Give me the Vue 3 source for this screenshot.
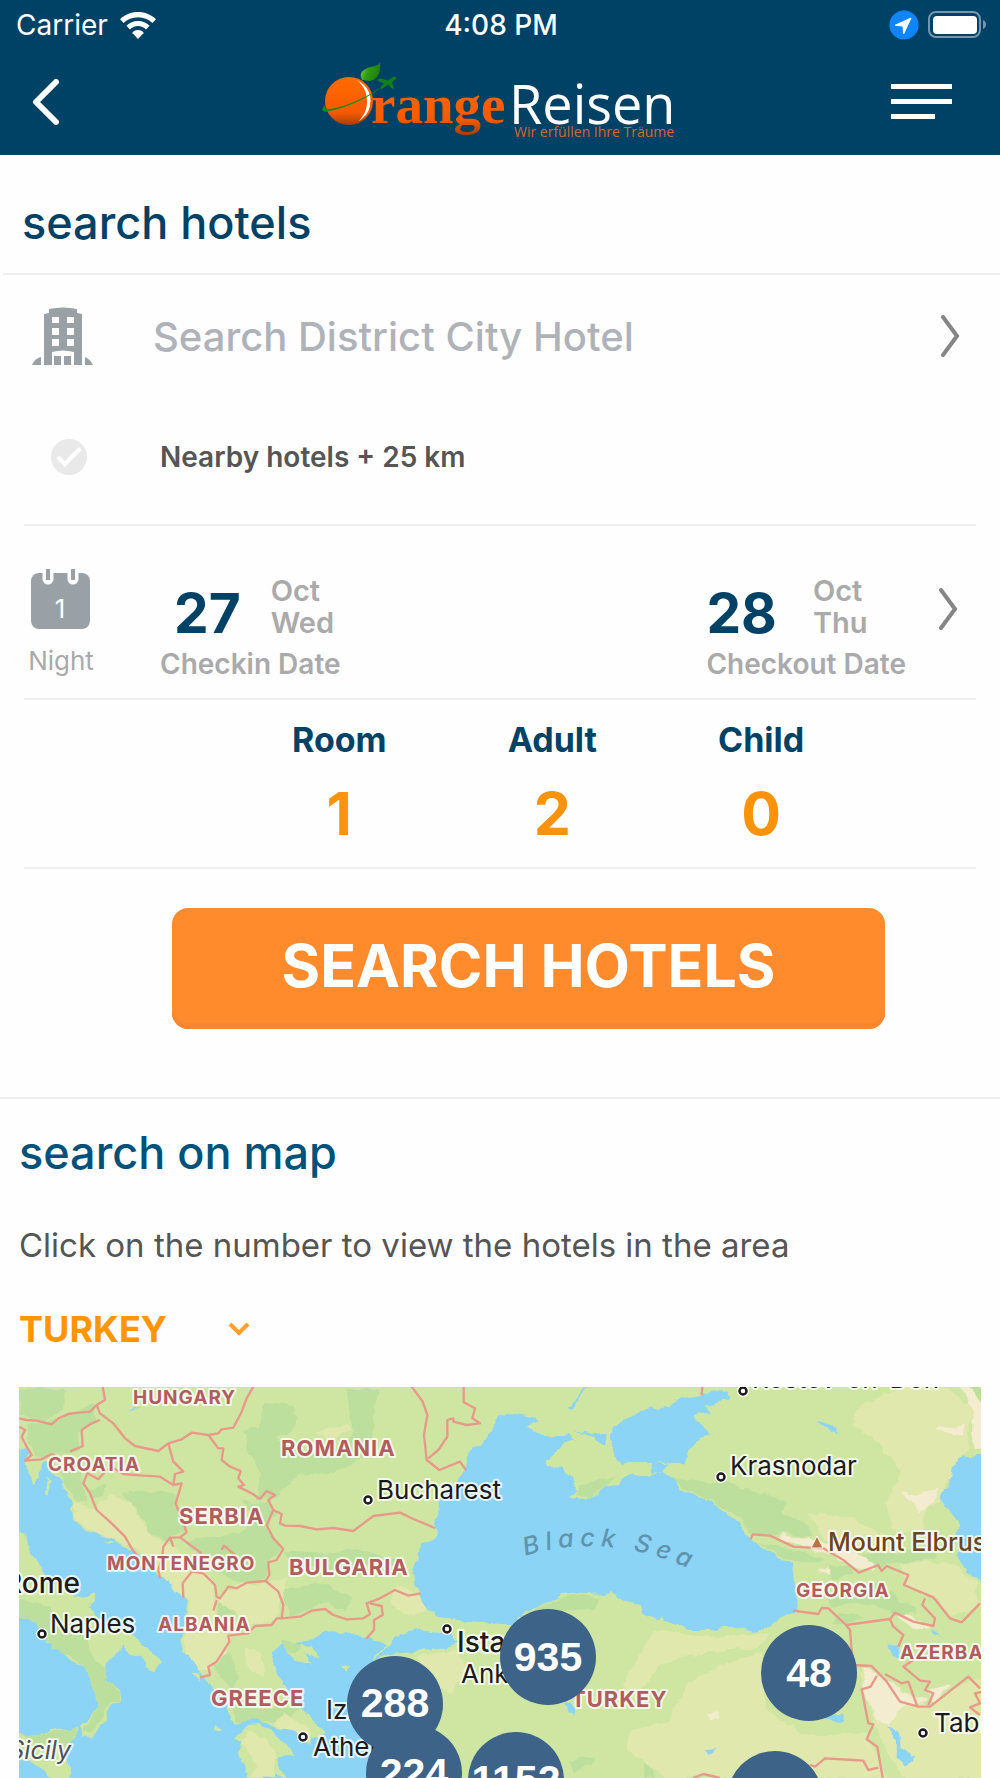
<template>
  <div class="app">
    <header class="header">
      <div class="status">
        <div class="status-left">
          <span>Carrier</span>
          <svg class="wifi" viewBox="0 0 36 27" fill="#fff">
            <path d="M18 0C11 0 4.600 2.700 0 7.200L3.600 11C7.400 7.300 12.400 5.200 18 5.200S28.600 7.300 32.400 11L36 7.200C31.400 2.700 25 0 18 0Z" />
            <path d="M18 9C13.500 9 9.400 10.800 6.400 13.700L10 17.400C12.100 15.300 14.900 14 18 14S23.900 15.300 26 17.400L29.600 13.700C26.600 10.800 22.500 9 18 9Z" />
            <path d="M18 18C15.900 18 14 18.900 12.600 20.300L12.600 21.200L18 27L23.400 21.200L23.400 20.300C22 18.900 20.100 18 18 18Z" />
          </svg>
        </div>
        <span class="time">4:08 PM</span>
        <div class="status-right">
          <svg class="location" viewBox="0 0 30 30">
            <circle cx="15" cy="15" r="14.600" fill="#0f86ff" />
            <path d="M22 8L6 15.300L14 16L14.600 24Z" fill="#fff" stroke="#fff" stroke-width="1" stroke-linejoin="round" />
          </svg>
          <svg class="battery" viewBox="0 0 60 28">
            <rect x="1" y="1" width="51" height="25" rx="7" fill="none" stroke="#7796ad" stroke-width="2" />
            <rect x="5" y="5" width="44" height="18" rx="4" fill="#fff" />
            <path d="M55 9C59 10.500 59 16.500 55 18Z" fill="#7796ad" />
          </svg>
        </div>
      </div>
      <div class="bar">
        <button class="back" aria-label="Back">
          <svg viewBox="0 0 28 46" fill="none" stroke="#fff" stroke-width="6" stroke-linecap="round" stroke-linejoin="round">
            <path d="M24 3L4 23L24 43" />
          </svg>
        </button>
        <svg class="logo" viewBox="0 0 354 80" role="img" aria-label="Orange Reisen">
          <defs>
            <linearGradient id="orange" x1="0" y1="0" x2="0" y2="1">
              <stop offset="0" stop-color="#ff6a00" />
              <stop offset="0.750" stop-color="#f65a00" />
              <stop offset="1" stop-color="#a83c08" />
            </linearGradient>
            <linearGradient id="leaf" x1="0" y1="0" x2="1" y2="0.400">
              <stop offset="0" stop-color="#8ed65b" />
              <stop offset="0.500" stop-color="#2f9a12" />
              <stop offset="1" stop-color="#1f8206" />
            </linearGradient>
          </defs>
          <circle cx="28" cy="39" r="24" fill="url(#orange)" />
          <path d="M36 18C47 24 51 33 49 43C48 50 44 55 38 59C44 52 46 47 46 39C46 31 43 24 36 18Z" fill="#fff" />
          <path d="M41 18C37 10 43 7 50 5C55 4 58 3 59 0C60 9 58 17 49 19Z" fill="url(#leaf)" />
          <path d="M4 43C-1 48 1 51 9 49C24 46 48 36 62 24C48 34 25 45 9 47C5 48 4 47 4 43Z" fill="#178a12" />
          <path d="M57 17L60 16.500L67 18.500L73 14.500L76 15.500L71 20L73 26.500L71 26.500L67 22.500L61 27L59 26L63 21.500L57 19Z" fill="#12801a" />
          <text class="logo-range" x="50" y="61" fill="url(#orange)">range</text>
          <text class="logo-reisen" x="188" y="62">Reisen</text>
          <text class="logo-tagline" x="193" y="75">Wir erfüllen Ihre Träume</text>
        </svg>
        <button class="menu" aria-label="Menu">
          <span></span>
          <span></span>
          <span class="short"></span>
        </button>
      </div>
    </header>

    <main>
      <form class="search" @submit.prevent>
        <h1 class="title">search hotels</h1>
        <div class="place">
          <div class="place-row">
            <svg class="hotel-icon" viewBox="0 0 61 58">
              <path d="M12 58V7L17 6V2Q31 -1 45 2V6L50 7V58Z" fill="#9aa1a6" />
              <path d="M0 58Q3 51 9 50V58ZM53 50Q58 52 61 58H53Z" fill="#9aa1a6" />
              <path d="M20 10h7v6h-7zM35 10h7v6h-7zM20 21h7v7h-7zM35 21h7v7h-7zM20 32h7v7h-7zM35 32h7v7h-7zM20 58V45Q31 42 42 45V58Z" fill="#fff" />
              <path d="M22 49h7v9h-7zM32 49h7v9h-7z" fill="#9aa1a6" />
            </svg>
            <input v-model="keyword" class="place-input" type="text" aria-label="Destination" placeholder="Search District City Hotel" />
            <button type="button" class="arrow" aria-label="Choose destination">
              <svg viewBox="0 0 20 42"><path d="M3 2L17 21L3 40" /></svg>
            </button>
          </div>
          <label class="nearby">
            <input v-model="nearby" type="checkbox" />
            <span>Nearby hotels + 25 km</span>
          </label>
        </div>

        <div class="dates">
          <div class="nights">
            <svg class="calendar" viewBox="0 0 60 60">
              <rect x="0" y="4" width="59" height="56" rx="8" fill="#9aa1a6" />
              <path d="M17 0V10M42 0V10" stroke="#fff" stroke-width="11" stroke-linecap="round" />
              <path d="M17 0V11M42 0V11" stroke="#9aa1a6" stroke-width="4" />
              <text x="29" y="49" text-anchor="middle" fill="#fff">1</text>
            </svg>
            <span>Night</span>
          </div>
          <button v-for="item in dates" :key="item.label" type="button" class="date" :class="item.name">
            <span class="date-value">
              <span class="day">{{ item.day }}</span>
              <span class="month">{{ item.month }}<br />{{ item.week }}</span>
            </span>
            <span class="date-label">{{ item.label }}</span>
          </button>
          <button type="button" class="arrow" aria-label="Choose dates">
            <svg viewBox="0 0 20 42"><path d="M3 2L17 21L3 40" /></svg>
          </button>
        </div>

        <div class="guests">
          <button v-for="item in guests" :key="item.label" type="button" class="guest">
            <span class="guest-label">{{ item.label }}</span>
            <span class="guest-count">{{ item.count }}</span>
          </button>
        </div>

        <div class="submit">
          <button type="submit">SEARCH HOTELS</button>
        </div>
      </form>

      <section class="map-section">
        <h2 class="title">search on map</h2>
        <p class="hint">Click on the number to view the hotels in the area</p>
        <div class="country">
          <select v-model="country" aria-label="Country">
            <option>TURKEY</option>
          </select>
          <svg viewBox="0 0 22 14"><path d="M2 2L11 11L20 2" /></svg>
        </div>

        <div class="map">
          <svg class="map-canvas" :viewBox="`0 0 ${mapWidth} ${mapHeight}`">
            <defs>
              <filter id="rough" x="0" y="0" width="1" height="1">
                <feTurbulence type="fractalNoise" baseFrequency="0.070" numOctaves="3" seed="4" />
                <feDisplacementMap in="SourceGraphic" scale="9" xChannelSelector="R" yChannelSelector="G" />
              </filter>
              <path id="sea-curve" d="M506 169Q590 143 680 186" />
            </defs>
            <rect :width="mapWidth" :height="mapHeight" fill="#cfe6a2" />
            <!-- terrain is drawn at three units per map unit -->
            <g filter="url(#rough)">
              <g transform="translate(-19 -17) scale(0.333333)">
                <rect x="0" y="0" width="3000" height="1300" fill="#cfe6a2" />
                <path v-for="(d, i) in forest" :key="'f' + i" :d="d" fill="#bddf9e" />
                <path v-for="(d, i) in steppe" :key="'s' + i" :d="d" fill="#e0e8ae" />
                <path v-for="(d, i) in sand" :key="'a' + i" :d="d" fill="#f3ecd0" />
                <path v-for="(d, i) in water" :key="'w' + i" :d="d" fill="#8bd4f6" />
                <path v-for="(d, i) in islands" :key="'i' + i" :d="d" fill="#cfe6a2" />
                <path d="M58 690L130 700 175 740 240 790 300 880 320 900 315 930 365 965 368 990 320 1010 300 1060 270 1090 250 1090 295 1010 285 970 255 890 190 850 140 815 110 760 58 750Z" fill="#bddf9e" />
                <path d="M58 1085L110 1095 235 1070 195 1150 120 1130Z" fill="#bddf9e" />
                <path d="M745 1080L800 1110 830 1160 820 1224 750 1224 765 1180 730 1120Z" fill="#e0e8ae" />
                <path d="M1745 345L1800 325 1860 325 1800 355 1765 390 1725 375Z" fill="#bddf9e" />
              </g>
            </g>
            <g class="borders" transform="translate(-19 -17) scale(0.333333)">
              <path v-for="(d, i) in borders" :key="i" :d="d" />
            </g>
            <g v-for="item in dots" :key="item.join()">
              <circle :cx="item[0]" :cy="item[1]" r="6" fill="#fff" />
              <circle :cx="item[0]" :cy="item[1]" r="3.500" fill="#fff" stroke="#1b1b1d" stroke-width="2.500" />
            </g>
            <path d="M792 161L798 149L804 161Z" fill="#b8733e" stroke="#fff" stroke-width="1" />
            <text
              v-for="item in labels"
              :key="item.text"
              class="map-label"
              :class="item.type"
              :x="item.x"
              :y="item.y"
              :text-anchor="item.anchor || 'start'"
            >{{ item.text }}</text>
            <text class="map-label sea"><textPath href="#sea-curve">Black Sea</textPath></text>
          </svg>
          <button
            v-for="item in markers"
            :key="item.x"
            class="marker"
            :aria-label="item.count ? null : 'Hotels'"
            :style="{ left: (item.x / mapWidth) * 100 + '%', top: (item.y / mapHeight) * 100 + '%' }"
          >{{ item.count }}</button>
        </div>
      </section>
    </main>
  </div>
</template>

<script setup>
import { ref } from "vue";

const keyword = ref("");
const nearby = ref(false);
const country = ref("TURKEY");

const dates = [
  { name: "checkin", day: 27, month: "Oct", week: "Wed", label: "Checkin Date" },
  { name: "checkout", day: 28, month: "Oct", week: "Thu", label: "Checkout Date" },
];

const guests = [
  { label: "Room", count: 1 },
  { label: "Adult", count: 2 },
  { label: "Child", count: 0 },
];

const mapWidth = 962;
const mapHeight = 391;

const markers = [
  { x: 529, y: 270, count: 935 },
  { x: 376, y: 317, count: 288 },
  { x: 395, y: 386, count: 224 },
  { x: 497, y: 393, count: 1152 },
  { x: 790, y: 286, count: 48 },
  { x: 756, y: 412, count: "" },
];

const labels = [
  { text: "HUNGARY", x: 114, y: 17, type: "country-small" },
  { text: "CROATIA", x: 29, y: 84, type: "country-small" },
  { text: "MONTENEGRO", x: 88, y: 183, type: "country-small" },
  { text: "ALBANIA", x: 139, y: 244, type: "country-small" },
  { text: "GEORGIA", x: 777, y: 210, type: "country-small" },
  { text: "AZERBAIJAN", x: 881, y: 272, type: "country-small" },
  { text: "ROMANIA", x: 262, y: 69, type: "country-large" },
  { text: "SERBIA", x: 160, y: 137, type: "country-large" },
  { text: "BULGARIA", x: 270, y: 188, type: "country-large" },
  { text: "GREECE", x: 192, y: 319, type: "country-large" },
  { text: "TURKEY", x: 552, y: 320, type: "country-large" },
  { text: "Rome", x: 61, y: 206, type: "capital", anchor: "end" },
  { text: "Istanbul", x: 438, y: 265, type: "capital" },
  { text: "Naples", x: 31, y: 246, type: "city" },
  { text: "Bucharest", x: 358, y: 112, type: "city" },
  { text: "Krasnodar", x: 711, y: 88, type: "city" },
  { text: "Rostov-on-Don", x: 733, y: 1, type: "city" },
  { text: "Ankara", x: 442, y: 296, type: "city" },
  { text: "Izmir", x: 307, y: 332, type: "city" },
  { text: "Athens", x: 294, y: 369, type: "city" },
  { text: "Tabriz", x: 915, y: 345, type: "city" },
  { text: "Mount Elbrus", x: 809, y: 164, type: "peak" },
  { text: "Sicily", x: 52, y: 372, type: "region", anchor: "end" },
];

const dots = [
  [23, 247], [349, 113], [702, 90], [724, 4], [904, 346], [284, 350], [428, 242],
];

const water = [
  // Adriatic, Ionian and Aegean
  "M50 240L85 250 75 275 80 310 98 345 112 330 125 300 135 272 150 300 185 335 195 375 215 400 205 415 225 450 255 475 300 500 340 510 380 535 410 560 450 585 480 620 520 655 566 690 560 730 552 780 550 840 590 885 610 925 640 960 680 1000 690 1050 710 1065 760 1050 830 1075 880 1080 930 1130 938 1100 980 1092 945 1050 900 1020 860 950 830 910 812 840 845 820 860 850 915 885 930 880 915 850 960 865 930 830 890 820 960 790 1030 785 1090 800 1160 825 1120 865 1130 920 1120 1000 1140 1060 1110 1120 1140 1300 0 1300 0 240Z",
  // Marmara
  "M1120 870L1170 825 1210 790 1260 775 1320 790 1350 780 1375 815 1330 840 1270 838 1230 850 1170 855Z",
  // Black Sea
  "M1490 140L1550 130 1590 135 1615 150 1580 170 1630 195 1710 195 1730 210 1690 225 1635 275 1640 288 1680 290 1720 320 1725 365 1710 378 1755 395 1780 380 1810 350 1860 345 1870 325 1900 310 1930 320 1990 305 2030 330 2040 355 2090 375 2150 405 2210 460 2260 515 2290 540 2340 565 2375 580 2385 650 2395 690 2375 725 2320 765 2270 785 2200 770 2140 780 2070 780 1990 740 1940 740 1920 705 1870 695 1840 660 1810 672 1750 668 1690 675 1610 710 1550 745 1530 765 1450 757 1370 750 1320 745 1280 715 1260 680 1235 600 1255 570 1260 520 1305 505 1315 400 1370 330 1400 300 1400 260 1460 200 1475 180Z",
  // Azov
  "M2185 60L2130 70 2050 85 1950 120 1890 140 1860 165 1830 185 1840 240 1860 280 1920 280 1990 275 2050 290 2060 250 2100 200 2135 195 2080 140 2130 125 2120 105 2190 85Z",
  // Caspian
  "M2880 260L3000 250 3000 690 2910 610 2870 560 2875 460 2850 420 2815 385 2845 350 2855 300Z",
  "M1950 275L2005 280 1990 305 1955 310Z",
  "M1720 180L1770 190 1820 185 1815 230 1790 205Z",
  "M378 122L425 108 410 118Z",
  "M1690 1005L1715 1000 1720 1035 1700 1030Z",
  "M2665 1070L2700 1080 2705 1130 2740 1160 2710 1190 2690 1165 2690 1110Z",
  "M2470 1040L2530 1030 2520 1060Z",
  "M2450 150L2500 170 2510 190 2460 165Z",
  "M2660 820L2700 830 2695 865 2680 860Z",
  "M2110 1135L2160 1130 2120 1150Z",
  "M2790 775L2835 800 2800 790Z",
  "M1700 110L1735 85 1758 50 1765 50 1740 90 1710 118Z",
];

const islands = [
  "M50 485L75 490 95 550 125 610 170 640 220 680 285 672 285 695 265 715 330 760 400 800 470 850 480 875 465 905 440 895 430 865 395 850 370 830 345 845 320 880 315 930 365 960 370 990 330 1010 320 1050 275 1100 245 1100 250 1070 295 1010 285 970 255 890 220 880 190 850 170 815 140 820 110 760 85 745 50 750Z",
  "M50 1085L110 1095 160 1080 240 1070 215 1110 195 1150 210 1190 205 1300 150 1224 120 1190 50 1160Z",
  "M700 1110L740 1068 780 1065 830 1100 850 1110 885 1155 850 1150 835 1165 860 1230 820 1210 800 1230 745 1230 735 1190 720 1150 730 1120Z",
  "M135 312L148 335 150 370 142 370Z",
  "M575 908L598 910 600 935Z",
  "M640 1060L670 1085 635 1080Z",
  "M310 515L345 517 330 522Z",
  "M1020 890L1045 885 1040 905Z",
];

const forest = [
  "M80 160L150 150 220 130 280 100 290 150 240 185 240 240 200 250 140 260 100 260 80 220Z",
  "M58 60L120 55 200 60 195 120 120 155 60 140Z",
  "M170 285L240 290 260 400 240 400 200 360Z",
  "M260 360L320 340 310 380 270 385Z",
  "M370 370L440 360 530 380 535 420 560 480 500 510 440 480 420 440Z",
  "M735 180L780 170 790 95 880 110 890 170 830 210 890 240 960 260 1010 240 1060 200 1040 60 1130 60 1120 170 1090 260 1000 310 900 310 830 380 770 390 780 310 740 240Z",
  "M730 390L800 400 830 430 800 480 850 540 810 570 800 630 720 640 640 600 560 520 600 500 720 490 770 450Z",
  "M850 545L960 550 1080 540 1200 570 1190 590 1080 590 960 600 870 580Z",
  "M840 660L960 640 1060 680 1030 720 960 700 870 740Z",
  "M650 700L700 690 720 730 650 740Z",
  "M640 870L690 850 720 920 700 960 660 930Z",
  "M840 810L910 815 900 850 850 850Z",
  "M700 1010L830 1010 900 1020 860 1050 770 1060 710 1060Z",
  "M1560 745L1640 700 1720 675 1800 680 1790 710 1700 720 1600 750Z",
  "M2020 320L2100 335 2200 340 2360 400 2350 430 2430 470 2440 500 2360 490 2300 490 2250 490 2200 430 2130 390 2050 350Z",
  "M2270 520L2350 530 2460 560 2480 580 2400 580 2330 555Z",
  "M2480 590L2540 580 2560 610 2500 630Z",
  "M2540 560L2700 540 2810 530 2800 570 2700 580 2600 590Z",
  "M2470 680L2560 660 2640 640 2700 690 2750 730 2690 740 2620 700 2500 710Z",
  "M2520 730L2590 740 2570 760 2500 760Z",
  "M2890 50L2994 50 2994 120 2930 90Z",
  "M1950 1080L1980 1110 1960 1224 1930 1224Z",
  "M1710 1170L1790 1160 1770 1190 1720 1210Z",
];

const steppe = [
  "M215 400L290 415 330 370 390 400 430 470 480 510 530 530 610 600 640 640 640 720 690 800 680 850 630 900 600 900 560 850 555 780 570 690 500 640 470 600 380 520 280 490 225 440Z",
  "M650 690L720 640 800 640 860 620 840 700 830 745 750 770 700 720Z",
  "M730 840L780 850 800 920 750 900Z",
  "M850 1030L930 1070 935 1120 880 1090 820 1060Z",
  "M950 190L1040 160 1050 180 1000 210Z",
  "M1190 640L1260 680 1280 720 1230 740 1170 700Z",
  "M1250 860L1370 840 1400 900 1350 970 1310 950Z",
  "M1890 1080L2000 1060 2060 940 2180 880 2280 850 2300 900 2300 1020 2420 1100 2600 1090 2660 1224 2000 1224 1880 1140Z",
  "M1960 780L2150 800 2300 790 2280 830 2100 850 1980 880 1900 1000 1870 940Z",
  "M2580 110L2640 80 2700 50 2830 50 2920 120 2900 240 2850 320 2820 390 2780 420 2760 500 2680 480 2660 400 2700 300 2640 220 2560 160Z",
  "M2420 430L2540 440 2700 520 2720 550 2600 540 2480 510Z",
  "M2700 580L2860 580 2930 640 2940 710 2850 740 2800 680 2720 640Z",
  "M2570 900L2680 940 2780 1010 2900 930 2994 920 2994 1224 2700 1224 2640 1100Z",
];

const sand = [
  "M2340 495L2420 505 2500 525 2570 550 2630 580 2620 600 2560 590 2500 555 2420 530 2350 510Z",
  "M2700 365L2750 375 2815 355 2800 400 2760 430 2740 395Z",
  "M2810 175L2900 165 2890 190 2830 190Z",
  "M2450 605L2480 595 2490 615Z",
  "M2590 890L2630 910 2700 960 2780 990 2700 1020 2670 1065 2630 1050 2590 960Z",
  "M2680 730L2740 740 2790 770 2740 780Z",
  "M2880 50L2920 60 2960 130 2980 240 2920 240 2920 130Z",
  "M2120 1030L2150 1020 2160 1045 2130 1050Z",
  "M2780 960L2850 945 2800 1000Z",
];

const borders = [
  "M58 145L80 150 110 152 155 163 175 145 205 132 235 128 270 125 290 105 315 90 308 50",
  "M290 105L300 130 340 160 375 205 405 228 475 243 505 220 545 208 575 188 625 195 655 190 665 178 700 173 725 125 740 85 760 50",
  "M58 170L75 180 65 200 80 230 95 255 75 272 125 268 155 252 170 260",
  "M300 150L275 160 245 180 248 228 210 245",
  "M505 220L520 275 550 305 525 312 520 345 480 320 430 317 370 312 340 295 320 300 295 328 262 310 250 340 270 370 290 420 335 460 375 500 395 535 410 555",
  "M520 345L545 340 527 400 560 487 540 502 510 503 490 530 485 570 475 600 480 625",
  "M510 503L520 530",
  "M540 502L605 550",
  "M625 195L655 235 670 235 665 270 690 290 722 303 715 325 732 345 715 350 755 370 780 387 800 363 825 375 805 390 820 420 845 432 840 460 855 467 900 468 950 478 1000 474 1060 483 1120 438 1200 428 1240 447 1305 474",
  "M820 420L800 465 820 505 850 537 830 570 805 577 808 615 797 633 740 638 710 655 685 650 660 685 650 680 645 645 610 610 575 605 548 640 550 683",
  "M797 633L835 665 850 705 845 745 830 745 815 765 765 768 745 790 685 797 688 815 650 875 625 890 630 915 600 922",
  "M845 745L900 740 935 722 975 717 1000 735 1040 748 1090 745 1110 733 1100 700 1140 685 1185 660 1225 677 1262 670",
  "M1110 700L1145 708 1148 735 1122 750 1122 780 1098 807",
  "M665 540L672 527 705 555",
  "M640 722L650 690",
  "M1235 50L1268 95 1282 135 1272 195 1280 270 1318 300 1380 275 1398 300",
  "M1391 50L1391 97 1425 115 1417 145 1440 160 1400 165 1360 155 1360 145 1342 150 1342 200 1315 240 1285 265",
  "M2107 50L2105 75",
  "M2252 508L2258 493 2310 497 2380 530 2470 535 2530 570 2577 608 2635 585 2645 603 2660 588 2725 615 2712 645 2800 682 2850 745 2885 757 2940 700",
  "M2380 722L2455 732 2465 714 2485 715 2538 765 2670 747 2685 728 2740 755 2800 768 2805 745 2767 705 2775 685",
  "M2538 765L2550 780 2555 840 2560 885 2615 888 2660 935 2700 995 2755 1010 2790 1010 2905 920 2940 955",
  "M2670 747L2680 770 2710 795 2695 830",
  "M2740 870L2710 890 2760 932 2790 935 2775 960 2800 970 2785 1005",
  "M2655 912L2705 940 2725 935 2752 1010",
  "M2630 918L2612 950 2585 958 2605 1060 2620 1063 2600 1108 2632 1130 2648 1224",
  "M2430 1185L2445 1190 2475 1165 2560 1170 2590 1172 2605 1200 2635 1193",
  "M2080 1224L2110 1212 2160 1224",
  "M2990 955L2925 970 2940 1000 2910 1012 2940 1035",
];
</script>

<style>
body {
  margin: 0;
  background: #fefefe;
}
</style>

<style scoped>
.app {
  font-family: Inter, "Liberation Sans", sans-serif;
  color: #004166;
  overflow: hidden;
}

button,
input,
select {
  font-family: inherit;
  color: inherit;
  border: 0;
  padding: 0;
  margin: 0;
  background: none;
}

svg {
  display: block;
}

.header {
  background: #004166;
  color: #fff;
  height: 155px;
}

.status {
  display: grid;
  grid-template-columns: 1fr auto 1fr;
  align-items: center;
  height: 50px;
  padding: 0 14px 0 16px;
  font-size: 28px;
  line-height: 50px;
}

.status-left {
  display: flex;
  align-items: center;
  gap: 12px;
}

.wifi {
  width: 36px;
  height: 27px;
}

.time {
  font-weight: 500;
}

.status-right {
  display: flex;
  align-items: center;
  justify-content: flex-end;
  gap: 9px;
  margin-right: -2px;
}

.location {
  width: 30px;
  height: 30px;
}

.battery {
  width: 60px;
  height: 28px;
}

.bar {
  display: grid;
  grid-template-columns: 1fr auto 1fr;
  align-items: center;
  height: 103px;
  padding: 0 36px 0 32px;
}

.back {
  width: 28px;
  height: 46px;
}

.logo {
  width: 354px;
  height: 80px;
}

.logo-range {
  font: bold 55px "Liberation Serif", serif;
}

.logo-reisen {
  font: 54px "Open Sans", sans-serif;
  fill: #fff;
}

.logo-tagline {
  font: 14px "Open Sans", sans-serif;
  fill: #d4692a;
}

.menu {
  display: flex;
  flex-direction: column;
  gap: 10px;
  justify-self: end;
  width: 61px;
  margin-right: 12px;
}

.menu span {
  height: 5px;
  background: #fff;
}

.menu .short {
  width: 44px;
}

.title {
  margin: 0;
  font-size: 45px;
  font-weight: 500;
  line-height: 60px;
}

.search .title {
  padding: 38px 22px 20px;
}

.place {
  margin-left: 3px;
  border-top: 2px solid #eee;
  padding: 29px 40px 44px 29px;
}

.place-row {
  display: flex;
  align-items: center;
  height: 64px;
}

.hotel-icon {
  width: 61px;
  height: 58px;
}

.place-input {
  flex: 1;
  min-width: 0;
  margin-left: 60px;
  height: 64px;
  font-size: 40px;
  font-weight: 500;
  outline: none;
}

.place-input::placeholder {
  color: #afb3b9;
  opacity: 1;
}

.arrow {
  width: 20px;
  height: 42px;
}

.arrow path {
  fill: none;
  stroke: #858585;
  stroke-width: 4;
  stroke-linecap: round;
}

.nearby {
  display: flex;
  align-items: center;
  gap: 73px;
  margin-top: 66px;
  padding-left: 19px;
  height: 46px;
  font-size: 28px;
  font-weight: 600;
  color: #555;
}

.nearby input {
  appearance: none;
  display: grid;
  place-items: center;
  width: 36px;
  height: 36px;
  border-radius: 50%;
  background: #e9e9e9;
}

.nearby input::after {
  content: "";
  width: 20px;
  height: 8px;
  border: solid #fff;
  border-width: 0 0 4px 4px;
  transform: rotate(-45deg) translate(2px, -2px);
}

.dates {
  display: flex;
  margin: 0 24px;
  border-top: 2px solid #eee;
  height: 172px;
}

.nights {
  display: flex;
  flex-direction: column;
  align-items: center;
  width: 74px;
  padding-top: 43px;
  font-size: 26px;
  line-height: 30px;
  color: #aaa;
}

.calendar {
  width: 60px;
  height: 60px;
  margin-bottom: 17px;
}

.calendar text {
  font-size: 26px;
}

.date {
  display: flex;
  flex-direction: column;
  align-items: flex-start;
  padding-top: 49px;
  text-align: left;
  color: #aaa;
  font-weight: 600;
}

.date-value {
  display: flex;
  align-items: center;
  height: 64px;
}

.day {
  padding-top: 12px;
  font-size: 55px;
  font-weight: 700;
  line-height: 64px;
  color: #004166;
}

.month {
  font-size: 29px;
  line-height: 32px;
}

.date-label {
  margin-top: 10px;
  font-size: 28px;
  line-height: 30px;
}

.checkin {
  margin-left: 62px;
}

.checkin .date-value {
  gap: 30px;
  padding-left: 14px;
}

.checkout {
  margin-left: auto;
}

.checkout .date-value {
  gap: 36px;
}

.dates .arrow {
  margin: 62px 18px 0 32px;
}

.guests {
  display: flex;
  gap: 121px;
  margin: 0 24px;
  padding-left: 268px;
  border-top: 2px solid #eee;
  border-bottom: 2px solid #eee;
  height: 167px;
}

.guest {
  display: flex;
  flex-direction: column;
  align-items: center;
  padding-top: 20px;
  font-weight: 700;
}

.guest-label {
  font-size: 34px;
  line-height: 40px;
}

.guest-count {
  margin-top: 18px;
  font-size: 59px;
  line-height: 72px;
  color: #fa920a;
}

.submit {
  padding: 39px 115px 68px 172px;
}

.submit button {
  width: 100%;
  height: 121px;
  padding-bottom: 6px;
  border-radius: 16px;
  background: #ff8b2d;
  box-shadow: inset 0 -6px #f58730;
  color: #fff;
  font-size: 59px;
  font-weight: 700;
}

.map-section {
  border-top: 2px solid #eee;
  padding: 24px 19px 0;
}

.map-section .title {
  color: #00527b;
}

.hint {
  margin: 42px 0 0;
  font-size: 33px;
  line-height: 40px;
  color: #555;
}

.country {
  display: flex;
  align-items: center;
  height: 40px;
  margin: 44px 0 38px;
  color: #ff9500;
}

.country select {
  appearance: none;
  height: 40px;
  padding-right: 82px;
  font-size: 36px;
  font-weight: 700;
  line-height: 40px;
}

.country svg {
  width: 22px;
  height: 14px;
  margin-left: -22px;
  pointer-events: none;
}

.country path {
  fill: none;
  stroke: #ff9f2e;
  stroke-width: 4;
}

.map {
  position: relative;
  overflow: hidden;
}

.map-canvas {
  width: 100%;
}

.borders {
  fill: none;
  stroke: #e8998a;
  stroke-width: 7;
  stroke-linejoin: round;
}

.map-label {
  paint-order: stroke;
  stroke: rgba(255, 255, 255, 0.8);
  stroke-width: 4px;
  stroke-linejoin: round;
  font-size: 26px;
  fill: #1b1b1d;
}

.country-small {
  font-size: 19px;
  font-weight: 700;
  letter-spacing: 1px;
  fill: #b25c5e;
}

.country-large {
  font-size: 22px;
  font-weight: 700;
  letter-spacing: 1px;
  fill: #b25c5e;
}

.capital {
  font-size: 28px;
  font-weight: 500;
}

.peak {
  font-size: 25px;
  fill: #6b4520;
  font-weight: 500;
}

.region {
  font-size: 25px;
  fill: #4c5258;
  font-style: italic;
}

.sea {
  stroke: none;
  font-size: 25px;
  fill: #5f93ae;
  font-style: italic;
  font-weight: 500;
  letter-spacing: 6px;
}

.marker {
  position: absolute;
  width: 96px;
  height: 96px;
  transform: translate(-50%, -50%);
  border-radius: 50%;
  background: #3d6389;
  color: #fff;
  font: bold 41px "Liberation Sans", sans-serif;
}
</style>
